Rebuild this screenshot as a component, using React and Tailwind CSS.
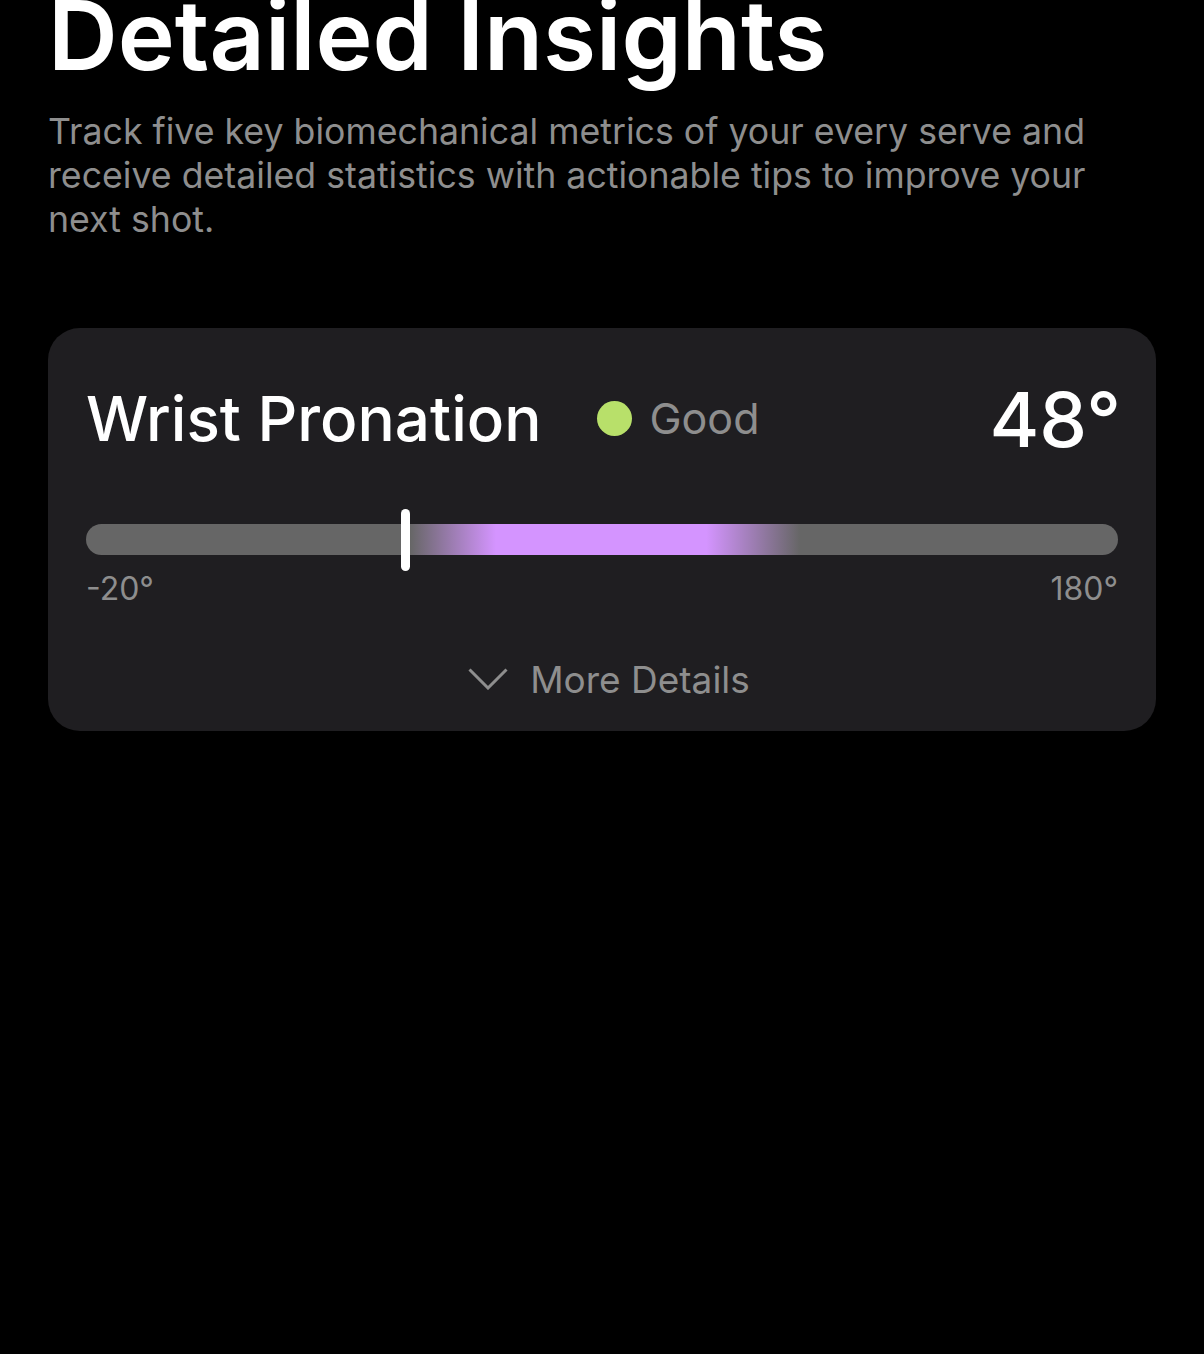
export default function App() {
  const font = { fontFamily: "Inter, 'Noto Sans', sans-serif" };

  return (
    <div className="flex min-h-screen flex-col bg-black px-12" style={font}>
      <h1 className="-mt-[13px] text-[96.6px] font-semibold leading-none text-white">
        Detailed Insights
      </h1>
      <p className="mt-[25px] text-[35.7px] leading-[44px] text-[#8e8e8e]">
        Track five key biomechanical metrics of your every serve and receive detailed statistics with actionable tips to improve your next shot.
      </p>

      <div className="mt-[87px] rounded-[32px] bg-[#1f1e21] px-[38px] pt-[53px] pb-[33px]">
        {/* header row */}
        <div className="flex h-[76px] items-center">
          <h2 className="text-[62px] font-medium leading-none text-white">Wrist Pronation</h2>
          <div className="ml-[55px] flex items-center gap-[18px]">
            <span className="h-[35px] w-[35px] rounded-full bg-[#b8e06a]" />
            <span className="text-[43px] leading-none text-[#8e8e8e]">Good</span>
          </div>
          <span className="-mr-[3px] ml-auto text-[76px] font-medium leading-none text-white">48°</span>
        </div>

        {/* range bar */}
        <div className="relative mt-[67px] h-[31px] rounded-full bg-[#666666]">
          <div
            className="absolute inset-y-0 left-[324px] w-[390px]"
            style={{
              background:
                "linear-gradient(to right, rgba(212,148,255,0) 0%, #d494ff 22%, #d494ff 76%, rgba(212,148,255,0) 100%)",
            }}
          />
          <div className="absolute left-[315px] top-[-15px] h-[62px] w-[9px] rounded-full bg-white" />
        </div>
        <div className="mt-[18px] flex justify-between text-[32px] leading-none text-[#8e8e8e]">
          <span>-20°</span>
          <span>180°</span>
        </div>

        <div className="mt-[56px] flex items-center justify-center gap-[22px] pl-[14px]">
          <svg width="40" height="22" viewBox="0 0 40 22" fill="none">
            <path d="M1.5 1.5 L20 20 L38.5 1.5" stroke="#8e8e8e" strokeWidth="3" />
          </svg>
          <span className="text-[37px] leading-none text-[#8e8e8e]">More Details</span>
        </div>
      </div>
    </div>
  );
}
